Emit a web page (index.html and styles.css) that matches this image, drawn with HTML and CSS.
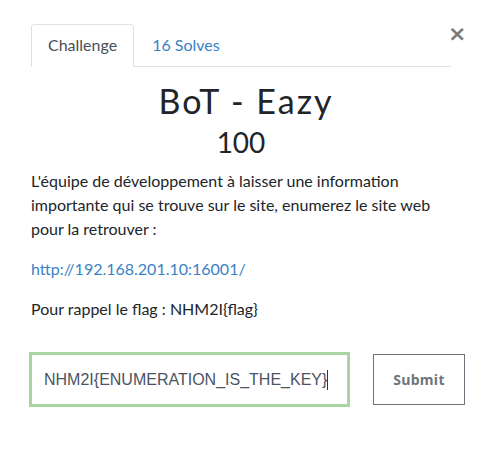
FILE: index.html
```html
<!DOCTYPE html>
<html>
<head>
<meta charset="utf-8">
<link rel="stylesheet" href="styles.css">
</head>
<body>
<div class="modal">
  <button class="close" aria-label="Close">×</button>
  <ul class="tabs">
    <li class="tab active">Challenge</li>
    <li class="tab link">16 Solves</li>
  </ul>
  <h2 class="title">BoT - Eazy</h2>
  <h3 class="value">100</h3>
  <p class="desc">L'équipe de développement à laisser une information importante qui se trouve sur le site, enumerez le site web pour la retrouver :</p>
  <p class="desc"><a class="url" href="#">http://192.168.201.10:16001/</a></p>
  <p class="desc">Pour rappel le flag : NHM2I{flag}</p>
  <div class="submit-row">
    <div class="input">NHM2I{ENUMERATION_IS_THE_KEY}<span class="caret"></span></div>
    <button class="submit">Submit</button>
  </div>
</div>
</body>
</html>
```
FILE: styles.css
```css
html, body { margin: 0; padding: 0; background: #fff; }
body { font-family: Lato, "Open Sans", sans-serif; color: #212529; }
.modal { position: relative; width: 420px; padding: 24px 0 0 31px; }
.close {
  position: absolute; left: 448px; top: 22px;
  border: 0; background: none; padding: 0;
  font-family: "DejaVu Sans", sans-serif; font-size: 22px; font-weight: bold;
  color: #7a7a7a; line-height: 24px;
}
.tabs { list-style: none; margin: 0; padding: 0; display: flex; border-bottom: 1px solid #dee2e6; }
.tab { font-size: 16px; line-height: 20px; padding: 10px 16px 11px 16px; margin-bottom: -1px; border: 1px solid transparent; border-radius: 4px 4px 0 0; }
.tab.active { border-color: #dee2e6 #dee2e6 #fff; color: #495057; }
.tab.link { color: #3a82c4; padding-left: 17px; }
.title {
  margin: 14px 0 0 10px; text-align: center; font-family: Lato, sans-serif; font-weight: 400;
  font-size: 34px; letter-spacing: 2px; line-height: 40px; color: #212529;
}
.value { margin: 4px 0 0; text-align: center; font-weight: 400; font-size: 28px; line-height: 34px; color: #212529; }
.desc { margin: 10px 0 0; font-size: 16px; line-height: 24px; color: #212529; }
.desc + .desc { margin-top: 16px; }
.url { color: #3a82c4; text-decoration: none; }
.submit-row { display: flex; align-items: center; margin-top: 31px; margin-left: -2px; }
.input {
  flex: none; width: 303px; height: 49px; border: 3px solid #a8d5a0; display: flex; align-items: center;
  padding-left: 12px; font-family: "Liberation Sans", Arial, sans-serif; font-size: 16px; color: #4a5463;
}
.caret { display: inline-block; width: 1px; height: 20px; background: #333; }
.submit {
  flex: none; margin-left: 23px; width: 92px; height: 51px; border: 1px solid #6c757d; background: #fff; border-radius: 0;
  font-family: "Open Sans", sans-serif; font-weight: 700; font-size: 14px; color: #6c757d; letter-spacing: 0.3px;
}
```
